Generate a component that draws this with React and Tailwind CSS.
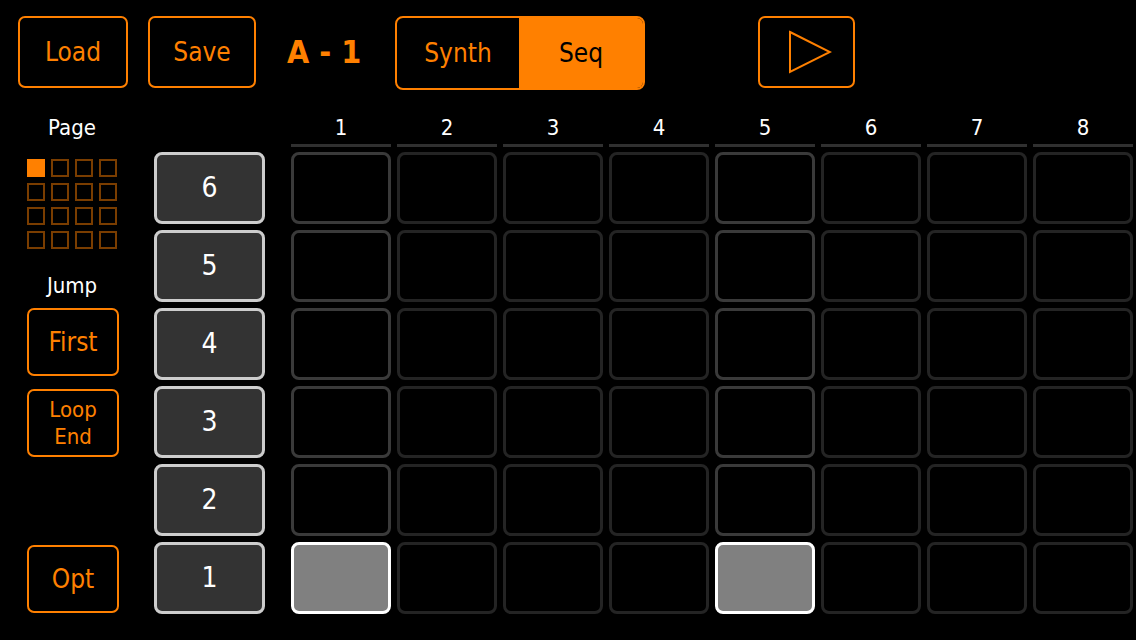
import React from "react";

const ORANGE = "#ff8000";
const cols = [1, 2, 3, 4, 5, 6, 7, 8];
const rows = [6, 5, 4, 3, 2, 1];

function OrangeButton({ className = "", children }) {
  return (
    <div
      className={`flex items-center justify-center border-2 border-[#ff8000] rounded-[7px] text-[#ff8000] ${className}`}
    >
      {children}
    </div>
  );
}

export default function App() {
  return (
    <div
      className="w-[1136px] h-[640px] bg-black overflow-hidden text-white"
      style={{ fontFamily: '"DejaVu Sans Condensed", "DejaVu Sans", sans-serif', fontStretch: "condensed" }}
    >
      {/* Top bar */}
      <div className="flex items-start pt-[16px] pl-[18px] h-[110px]">
        <OrangeButton className="w-[110px] h-[72px] text-[26px]">Load</OrangeButton>
        <OrangeButton className="ml-[20px] w-[108px] h-[72px] text-[26px]">Save</OrangeButton>
        <div className="w-[139px] h-[72px] pl-[31px] flex items-center text-[#ff8000] text-[32px] font-bold">
          A - 1
        </div>
        <div className="flex w-[250px] h-[74px] border-2 border-[#ff8000] rounded-[8px] overflow-hidden">
          <div className="w-[122px] flex items-center justify-center text-[#ff8000] text-[26px]">Synth</div>
          <div className="flex-1 flex items-center justify-center bg-[#ff8000] text-black text-[26px]">Seq</div>
        </div>
        <OrangeButton className="ml-[113px] w-[97px] h-[72px]">
          <svg width="44" height="44" viewBox="0 0 44 44" className="ml-[6px]">
            <polygon points="2,2 42,22 2,42" fill="none" stroke={ORANGE} strokeWidth="2" />
          </svg>
        </OrangeButton>
      </div>

      {/* Main */}
      <div className="flex">
        {/* Left column */}
        <div className="ml-[27px] w-[92px] flex flex-col">
          <div className="h-[34px] -ml-[2px] flex items-center justify-center text-[22px]">Page</div>
          <div className="mt-[15px] grid grid-cols-[repeat(4,18px)] gap-[6px]">
            {Array.from({ length: 16 }).map((_, i) => (
              <div
                key={i}
                className={
                  i === 0
                    ? "w-[18px] h-[18px] bg-[#ff8000]"
                    : "w-[18px] h-[18px] border-2 border-[#7a3d00]"
                }
              />
            ))}
          </div>
          <div className="mt-[19px] h-[34px] -ml-[2px] flex items-center justify-center text-[22px]">Jump</div>
          <OrangeButton className="mt-[6px] h-[68px] text-[26px]">First</OrangeButton>
          <OrangeButton className="mt-[13px] h-[68px] text-[22px] leading-[27px] flex-col">
            <span>Loop</span>
            <span>End</span>
          </OrangeButton>
          <OrangeButton className="mt-[88px] h-[68px] text-[26px]">Opt</OrangeButton>
        </div>

        {/* Row labels */}
        <div className="ml-[35px] w-[111px] flex flex-col gap-[6px] pt-[42px]">
          {rows.map((r) => (
            <div
              key={r}
              className="h-[72px] rounded-[8px] border-[3px] border-[#cdcdcd] bg-[#333333] flex items-center justify-center text-[28px]"
            >
              {r}
            </div>
          ))}
        </div>

        {/* Step grid */}
        <div className="ml-[26px] flex gap-[6px]">
          {cols.map((c) => {
            const strong = c === 1 || c === 5;
            return (
              <div key={c} className="w-[100px] flex flex-col">
                <div className="h-[34px] flex items-center justify-center text-[22px]">{c}</div>
                <div className="h-[3px] bg-[#303030]" />
                <div className="mt-[5px] flex flex-col gap-[6px]">
                  {rows.map((r) => {
                    const active = r === 1 && strong;
                    let cls = "border-[#242424]";
                    if (active) cls = "border-white bg-[#808080]";
                    else if (strong) cls = "border-[#3a3a3a]";
                    return (
                      <div key={r} className={`h-[72px] rounded-[8px] border-[3px] ${cls}`} />
                    );
                  })}
                </div>
              </div>
            );
          })}
        </div>
      </div>
    </div>
  );
}
